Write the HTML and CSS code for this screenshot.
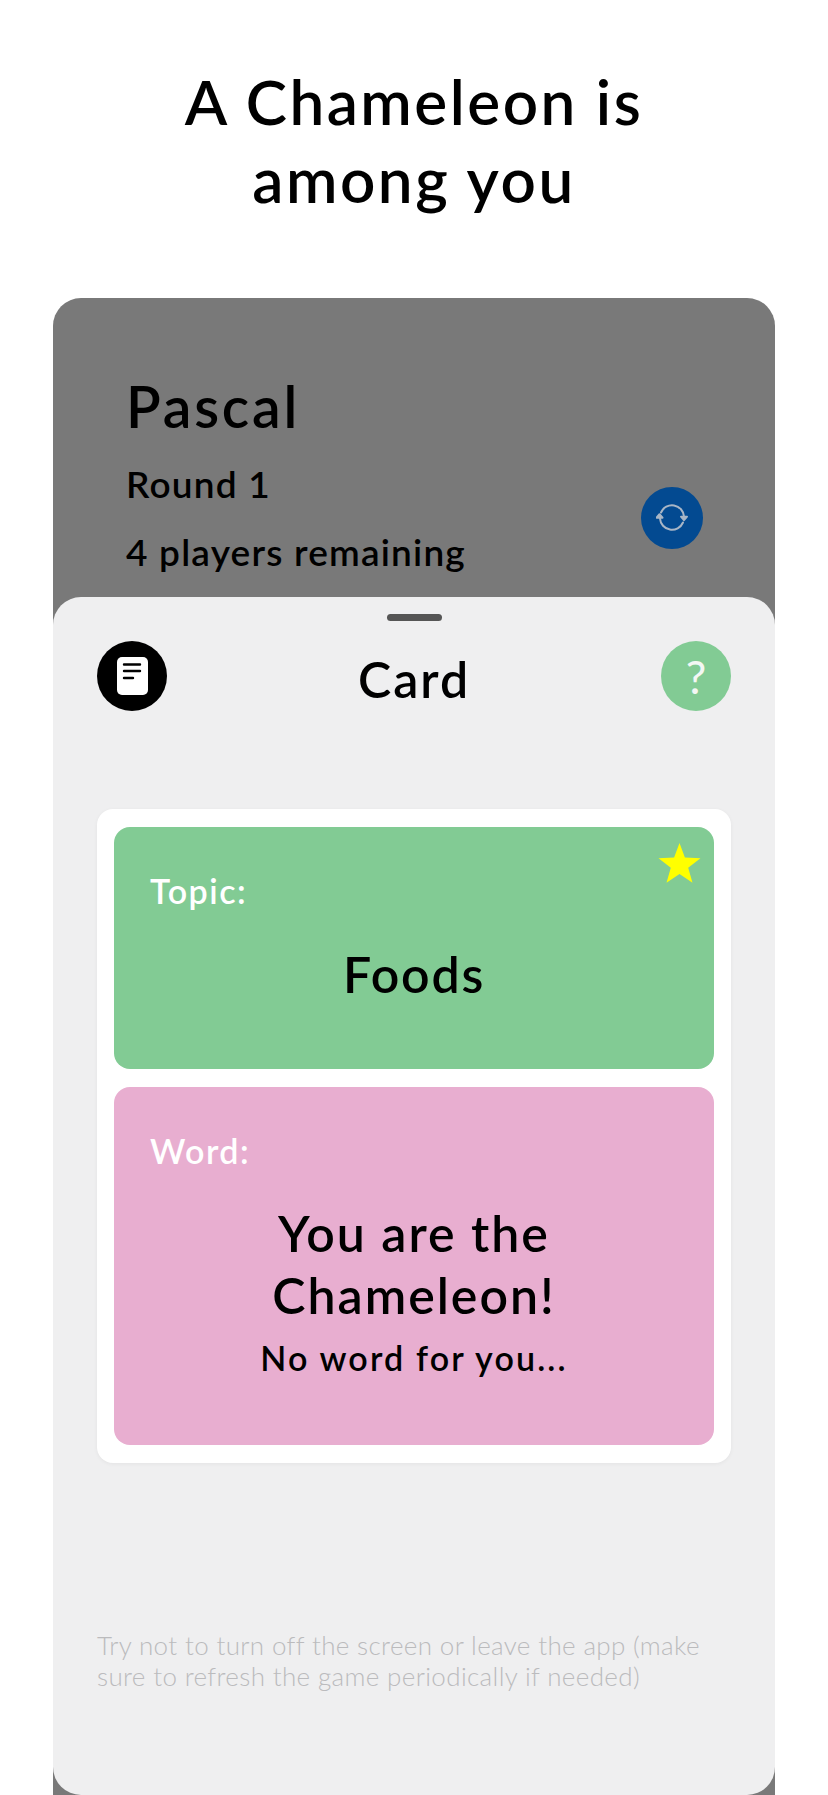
FILE: index.html
```html
<!DOCTYPE html>
<html lang="en">
<head>
    <meta charset="UTF-8">
    <meta name="viewport" content="width=device-width, initial-scale=1.0">
    <title>A Chameleon is among you</title>
    <link rel="stylesheet" href="styles.css">
</head>
<body>
    <h1 class="page-title">A Chameleon is<br>among you</h1>

    <div class="game">
        <div class="player">
            <div class="player-info">
                <h2 class="player-name">Pascal</h2>
                <p class="player-line">Round 1</p>
                <p class="player-line">4 players remaining</p>
            </div>
            <button class="refresh-btn" type="button" aria-label="Refresh">
                <svg viewBox="0 0 32 32" width="32" height="32" fill="none" stroke="#a9b6c6" stroke-width="2" stroke-linecap="round" stroke-linejoin="round">
                    <path d="M5 10.500A12 12 0 0 1 28 14.500"/>
                    <path d="M27 20.500A12 12 0 0 1 4 16.500"/>
                    <path d="M25 14.700h6l-3 3.500z" fill="#a9b6c6"/>
                    <path d="M0.500 15.700h6l-3-3.500z" fill="#a9b6c6"/>
                </svg>
            </button>
        </div>

        <div class="sheet">
            <div class="handle"></div>
            <div class="sheet-head">
                <button class="round-btn notes-btn" type="button" aria-label="Notes">
                    <svg viewBox="0 0 31 38" width="31" height="38">
                        <rect width="31" height="38" rx="5" fill="#fff"/>
                        <path d="M7 7.500h16M7 14h16M7 21h9" stroke="#000" stroke-width="2.400" stroke-linecap="round"/>
                    </svg>
                </button>
                <h2 class="sheet-title">Card</h2>
                <button class="round-btn help-btn" type="button" aria-label="Help">?</button>
            </div>

            <div class="card">
                <div class="panel panel-topic">
                    <svg class="star" viewBox="0 0 42 40" width="43" height="40">
                        <path d="M21 0l5.400 14.600 15.600.6-12.300 9.600 4.300 15-13-8.700-13 8.700 4.300-15L0 15.200l15.600-.6z" fill="#ffff00"/>
                    </svg>
                    <div class="panel-label">Topic:</div>
                    <div class="topic-value">Foods</div>
                </div>
                <div class="panel panel-word">
                    <div class="panel-label">Word:</div>
                    <div class="word-value">You are the<br>Chameleon!</div>
                    <div class="word-note">No word for you...</div>
                </div>
            </div>

            <p class="hint">Try not to turn off the screen or leave the app (make sure to refresh the game periodically if needed)</p>
        </div>
    </div>
</body>
</html>
```

FILE: styles.css
```css
* {
    box-sizing: border-box;
}
html, body {
    margin: 0;
    height: 1795px;
    overflow: hidden;
}
body {
    background-color: #fff;
    color: #000;
    font-family: "Lato", "Noto Sans", sans-serif;
    font-weight: 600;
    padding: 62px 53px 0;
}
h1, h2, p {
    margin: 0;
    font-weight: 600;
}
button {
    border: none;
    padding: 0;
    font-family: inherit;
}

.page-title {
    font-size: 62px;
    line-height: 78px;
    letter-spacing: 2.500px;
    text-align: center;
    height: 236px;
}

.game {
    position: relative;
    height: 1497px;
    background-color: #797979;
    border-radius: 28px 28px 0 0;
}

.player {
    display: flex;
    justify-content: space-between;
    padding: 76px 72px 0 73px;
}
.player-name {
    font-size: 57px;
    line-height: 64px;
    letter-spacing: 2.800px;
    margin-bottom: 24px;
}
.player-line {
    font-size: 37px;
    line-height: 44px;
    letter-spacing: 1.200px;
    margin-bottom: 24px;
}
.refresh-btn {
    width: 62px;
    height: 62px;
    margin-top: 113px;
    border-radius: 50%;
    background-color: #034a91;
    display: flex;
    align-items: center;
    justify-content: center;
}

.sheet {
    position: absolute;
    left: 0;
    right: 0;
    bottom: 0;
    height: 1198px;
    padding: 17px 44px 0;
    background-color: #efeff0;
    border-radius: 28px;
}
.handle {
    width: 55px;
    height: 7px;
    margin: 0 auto 20px;
    border-radius: 4px;
    background-color: #555;
}
.sheet-head {
    display: flex;
    align-items: center;
    justify-content: space-between;
    height: 70px;
}
.sheet-title {
    font-size: 50px;
    line-height: 70px;
    letter-spacing: 2px;
    padding-top: 5px;
}
.round-btn {
    width: 70px;
    height: 70px;
    border-radius: 50%;
    display: flex;
    align-items: center;
    justify-content: center;
}
.notes-btn {
    background-color: #000;
}
.help-btn {
    background-color: #82cb94;
    color: #f3f7f4;
    font-size: 46px;
    font-weight: 400;
}

.card {
    margin-top: 98px;
    padding: 18px 17px;
    background-color: #fff;
    border-radius: 16px;
    box-shadow: 0 1px 4px rgba(0, 0, 0, 0.05);
}
.panel {
    position: relative;
    border-radius: 16px;
    padding: 0 36px;
}
.panel-topic {
    height: 242px;
    background-color: #82cb94;
    margin-bottom: 18px;
}
.panel-word {
    height: 358px;
    background-color: #e8aed0;
}
.panel-label {
    padding-top: 42px;
    font-size: 34px;
    line-height: 44px;
    letter-spacing: 1.500px;
    color: #fff;
}
.star {
    position: absolute;
    top: 16px;
    right: 13px;
}
.topic-value {
    margin-top: 31px;
    font-size: 50px;
    line-height: 60px;
    letter-spacing: 1.800px;
    text-align: center;
}
.word-value {
    margin-top: 29px;
    font-size: 50px;
    line-height: 62px;
    letter-spacing: 2px;
    text-align: center;
}
.word-note {
    margin-top: 10px;
    font-size: 34px;
    line-height: 44px;
    letter-spacing: 2.150px;
    text-align: center;
}

.hint {
    margin-top: 167px;
    font-size: 26px;
    line-height: 31px;
    letter-spacing: 0.350px;
    font-weight: 300;
    color: #bbbbbd;
}
```
